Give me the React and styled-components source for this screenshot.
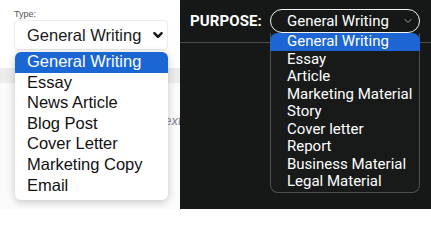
import React from 'react';
import styled, { createGlobalStyle } from 'styled-components';

const GlobalStyle = createGlobalStyle`
  html, body { margin: 0; padding: 0; background: #ffffff; }
  #root { width: 431px; height: 209px; overflow: hidden; }
`;

const Page = styled.div`
  display: flex;
  width: 431px;
  height: 209px;
`;

const LightPane = styled.div`
  position: relative;
  width: 180px;
  display: flex;
  flex-direction: column;
  background: #fbfbfb;
  font-family: "Liberation Sans", Arial, sans-serif;
`;

const FormTop = styled.div`
  display: flex;
  flex-direction: column;
  padding: 9px 12px 18px 14px;
  background: #ffffff;
`;

const FieldLabel = styled.label`
  font-size: 9px;
  color: #555555;
  line-height: 11px;
`;

const NativeSelect = styled.div`
  display: flex;
  align-items: center;
  justify-content: space-between;
  height: 30px;
  padding: 0 3px 0 12px;
  box-sizing: border-box;
  border: 1px solid #ececec;
  border-radius: 4px;
  background: #ffffff;
  box-shadow: 0 1px 2px rgba(0, 0, 0, 0.04);
  font-size: 16.5px;
  color: #1a1a1a;
`;

const Band = styled.div`
  height: 15px;
  background: #ececec;
`;

const EditorHint = styled.div`
  padding: 30px 0 0 126px;
  font-size: 13px;
  font-style: italic;
  color: #7d8799;
  white-space: nowrap;
`;

const LightMenu = styled.ul`
  position: absolute;
  left: 15px;
  top: 52px;
  width: 153px;
  margin: 0;
  padding: 0 0 4px;
  list-style: none;
  background: #ffffff;
  border-radius: 6px;
  box-shadow: 0 2px 9px rgba(0, 0, 0, 0.22);
`;

const LightOption = styled.li`
  height: 20.6px;
  line-height: 19px;
  padding-left: 12px;
  font-size: 16.5px;
  color: ${p => (p.$active ? '#ffffff' : '#111111')};
  background: ${p => (p.$active ? '#1a66d3' : 'transparent')};
  border-radius: ${p => (p.$active ? '6px 6px 0 0' : '0')};
`;

const DarkPane = styled.div`
  position: relative;
  flex: 1;
  overflow: hidden;
  background: #161817;
  font-family: Roboto, "Noto Sans", sans-serif;
`;

const Header = styled.div`
  display: flex;
  align-items: center;
  height: 42px;
  padding-left: 10px;
  border-bottom: 1px solid #4b4d4c;
`;

const HeaderLabel = styled.span`
  width: 80px;
  font-size: 15px;
  font-weight: 700;
  color: #ffffff;
  letter-spacing: 0.1px;
`;

const PillSelect = styled.div`
  display: flex;
  align-items: center;
  justify-content: space-between;
  width: 150px;
  height: 24px;
  box-sizing: border-box;
  padding: 0 6px 0 16px;
  border: 1.5px solid #f2f2f2;
  border-radius: 12px;
  font-size: 15px;
  color: #ffffff;
  margin-top: -1px;
`;

const DarkMenu = styled.ul`
  position: absolute;
  left: 90px;
  top: 33px;
  width: 150px;
  box-sizing: border-box;
  margin: 0;
  padding: 0 0 1px;
  list-style: none;
  background: #181a19;
  border: 1px solid #4e504f;
  border-top: none;
  border-radius: 0 0 8px 8px;
`;

const DarkOption = styled.li`
  height: 17.5px;
  line-height: 17.5px;
  font-size: 15px;
  color: #ffffff;
  background: ${p => (p.$active ? '#1c65d2' : 'transparent')};
  border-radius: ${p => (p.$active ? '8px 8px 0 0' : '0')};
  margin: ${p => (p.$active ? '0 -1px' : '0')};
  padding-left: ${p => (p.$active ? '17px' : '16px')};
`;

const Chevron = ({ size, stroke, width }) => (
  <svg width={size} height={size} viewBox="0 0 10 10" fill="none">
    <path d="M2 3.5 L5 6.5 L8 3.5" stroke={stroke} strokeWidth={width} strokeLinecap="round" strokeLinejoin="round" />
  </svg>
);

const typeOptions = ['General Writing', 'Essay', 'News Article', 'Blog Post', 'Cover Letter', 'Marketing Copy', 'Email'];
const purposeOptions = [
  'General Writing', 'Essay', 'Article', 'Marketing Material', 'Story',
  'Cover letter', 'Report', 'Business Material', 'Legal Material',
];

export default function App() {
  return (
    <>
      <GlobalStyle />
      <Page>
        <LightPane>
          <FormTop>
            <FieldLabel>Type:</FieldLabel>
            <NativeSelect>
              <span>General Writing</span>
              <Chevron size={12} stroke="#111" width={2} />
            </NativeSelect>
          </FormTop>
          <Band />
          <EditorHint>Enter text</EditorHint>
          <LightMenu>
            {typeOptions.map((o, i) => (
              <LightOption key={o} $active={i === 0}>{o}</LightOption>
            ))}
          </LightMenu>
        </LightPane>
        <DarkPane>
          <Header>
            <HeaderLabel>PURPOSE:</HeaderLabel>
            <PillSelect>
              <span>General Writing</span>
              <Chevron size={10} stroke="#9a9a9a" width={1} />
            </PillSelect>
          </Header>
          <DarkMenu>
            {purposeOptions.map((o, i) => (
              <DarkOption key={o} $active={i === 0}>{o}</DarkOption>
            ))}
          </DarkMenu>
        </DarkPane>
      </Page>
    </>
  );
}
